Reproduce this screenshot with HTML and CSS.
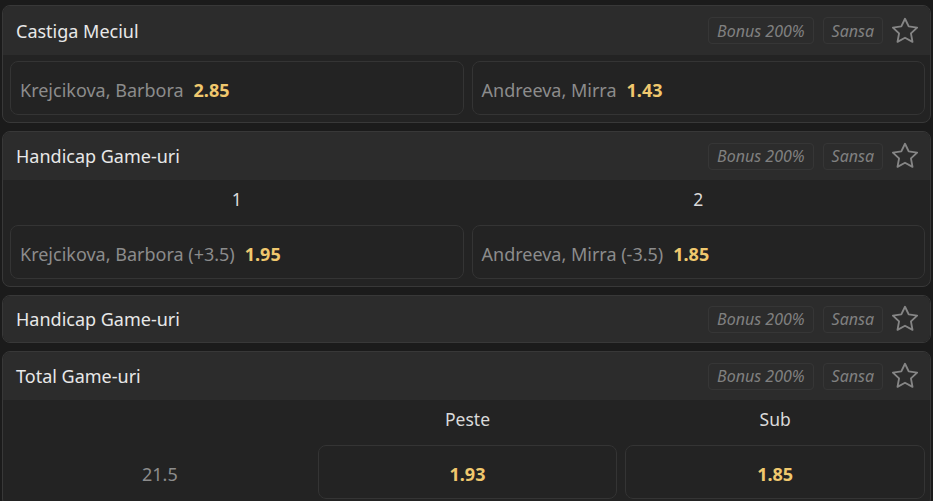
FILE: index.html
```html
<!DOCTYPE html>
<html lang="ro">
<head>
<meta charset="utf-8">
<link rel="stylesheet" href="styles.css">
</head>
<body>
<div class="list">
  <section class="card">
    <header class="head first">
      <span class="title">Castiga Meciul</span>
      <div class="tools">
        <span class="tag">Bonus 200%</span>
        <span class="tag">Sansa</span>
        <svg class="star" viewBox="0 0 24 24"><path d="M12 2.2l2.95 6.15 6.75.9-4.95 4.7 1.25 6.7L12 17.4l-6 3.25 1.25-6.7-4.95-4.7 6.75-.9z"/></svg>
      </div>
    </header>
    <div class="body two">
      <button class="odd"><span class="name">Krejcikova, Barbora</span><b class="price">2.85</b></button>
      <button class="odd"><span class="name">Andreeva, Mirra</span><b class="price">1.43</b></button>
    </div>
  </section>

  <section class="card">
    <header class="head">
      <span class="title">Handicap Game-uri</span>
      <div class="tools">
        <span class="tag">Bonus 200%</span>
        <span class="tag">Sansa</span>
        <svg class="star" viewBox="0 0 24 24"><path d="M12 2.2l2.95 6.15 6.75.9-4.95 4.7 1.25 6.7L12 17.4l-6 3.25 1.25-6.7-4.95-4.7 6.75-.9z"/></svg>
      </div>
    </header>
    <div class="body two">
      <div class="col-label">1</div>
      <div class="col-label">2</div>
      <button class="odd"><span class="name">Krejcikova, Barbora (+3.5)</span><b class="price">1.95</b></button>
      <button class="odd"><span class="name">Andreeva, Mirra (-3.5)</span><b class="price">1.85</b></button>
    </div>
  </section>

  <section class="card">
    <header class="head solo">
      <span class="title">Handicap Game-uri</span>
      <div class="tools">
        <span class="tag">Bonus 200%</span>
        <span class="tag">Sansa</span>
        <svg class="star" viewBox="0 0 24 24"><path d="M12 2.2l2.95 6.15 6.75.9-4.95 4.7 1.25 6.7L12 17.4l-6 3.25 1.25-6.7-4.95-4.7 6.75-.9z"/></svg>
      </div>
    </header>
  </section>

  <section class="card">
    <header class="head">
      <span class="title">Total Game-uri</span>
      <div class="tools">
        <span class="tag">Bonus 200%</span>
        <span class="tag">Sansa</span>
        <svg class="star" viewBox="0 0 24 24"><path d="M12 2.2l2.95 6.15 6.75.9-4.95 4.7 1.25 6.7L12 17.4l-6 3.25 1.25-6.7-4.95-4.7 6.75-.9z"/></svg>
      </div>
    </header>
    <div class="body three">
      <div class="col-label"></div>
      <div class="col-label">Peste</div>
      <div class="col-label">Sub</div>
      <div class="line">21.5</div>
      <button class="odd center"><b class="price">1.93</b></button>
      <button class="odd center"><b class="price">1.85</b></button>
    </div>
  </section>
</div>
</body>
</html>
```

FILE: styles.css
```css
* { box-sizing: border-box; }
html, body { margin: 0; padding: 0; background: #1b1b1b; }
body {
  font-family: "Noto Sans", "Open Sans", sans-serif;
  color: #e6e6e6;
  height: 501px;
  overflow: hidden;
}
.list {
  display: flex;
  flex-direction: column;
  gap: 8px;
  padding: 5px 2px 0 2px;
}
.card {
  background: #232323;
  border: 1px solid #383838;
  border-radius: 8px;
  overflow: hidden;
}
.head {
  display: flex;
  align-items: center;
  justify-content: space-between;
  height: 48px;
  padding: 0 10px 0 13px;
  background: #2c2c2c;
}
.head.first { height: 49px; }
.head.solo { height: 46px; }
.title {
  font-size: 18px;
  color: #e8e8e8;
}
.tools {
  display: flex;
  align-items: center;
  gap: 9px;
}
.tag {
  display: inline-flex;
  align-items: center;
  height: 27px;
  padding: 0 8px;
  border: 1px solid #363636;
  border-radius: 4px;
  font-style: italic;
  font-size: 16px;
  color: #808080;
}
.star {
  width: 30px;
  height: 30px;
  margin-left: -2px;
  fill: none;
  stroke: #858585;
  stroke-width: 1.5;
  stroke-linejoin: round;
}
.body {
  display: grid;
  gap: 0 8px;
  padding: 6px 5px 7px 7px;
}
.body.two { grid-template-columns: 1fr 1fr; }
.body.three { grid-template-columns: 1fr 1fr 1fr; }
.col-label {
  height: 26px;
  display: flex;
  align-items: center;
  justify-content: center;
  font-size: 17.5px;
  color: #dadada;
  margin-bottom: 13px;
}
.odd {
  display: flex;
  align-items: center;
  gap: 10px;
  height: 54px;
  padding: 3px 9px 0;
  background: #232323;
  border: 1px solid #343434;
  border-radius: 8px;
  font-family: inherit;
  text-align: left;
}
.odd.center { justify-content: center; }
.name {
  font-size: 18px;
  color: #8c8c8c;
}
.price {
  font-size: 18px;
  font-weight: 700;
  color: #f0c86e;
}
.line {
  height: 54px;
  padding-top: 3px;
  display: flex;
  align-items: center;
  justify-content: center;
  font-size: 18px;
  color: #8c8c8c;
}
```
